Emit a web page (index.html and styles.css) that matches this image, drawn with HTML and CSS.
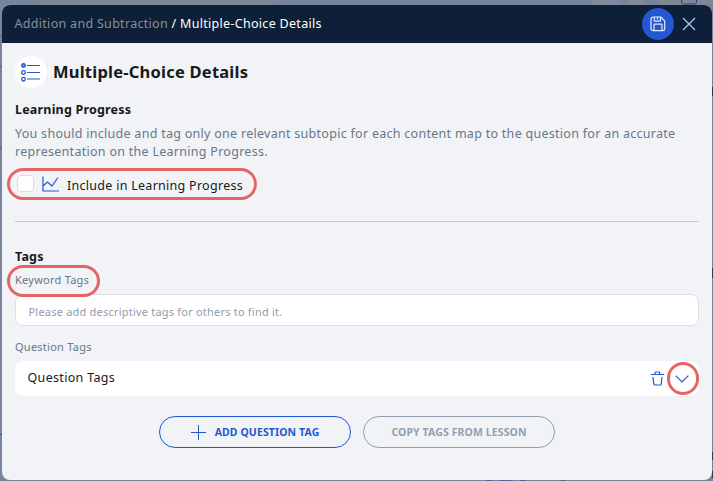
FILE: index.html
```html
<!DOCTYPE html>
<html lang="en">
<head>
<meta charset="utf-8">
<title>Multiple-Choice Details</title>
<link rel="stylesheet" href="styles.css">
</head>
<body>
<div class="backdrop" aria-hidden="true">
  <svg width="713" height="481" viewBox="0 0 713 481">
    <rect x="40" width="235" height="5" fill="#7d8796"/>
    <rect x="593" width="51" height="5" fill="#808a98"/>
    <rect x="660" width="53" height="5" fill="#7e8897"/>
    <circle cx="623" cy="-3" r="7" fill="#7484a9"/>
    <path d="M681.500 0v2q0 2 2 2h11q2 0 2-2V0" fill="none" stroke="#263f88"/>
    <path d="M0 35.500h2M0 66.500h2M0 148.500h2" stroke="#586579"/>
    <path d="M0 434.500h2" stroke="#4056a0"/>
    <path d="M712.500 87v9M712.500 268v10M712.500 452v8M712.500 471v7" stroke="#303a4b"/>
    <path d="M486 480.500h6M499 480.500h14M520 480.500h6M561 480.500h4" stroke="#50639a"/>
  </svg>
</div>
<main class="dialog">
  <header class="topbar">
    <nav class="crumbs"><span class="parent">Addition and Subtraction</span> / Multiple-Choice Details</nav>
    <button class="save" aria-label="Save">
      <svg width="16" height="16" viewBox="0 0 16 16"><path d="M3.300 1H11l3.700 4v7.500q0 2.200-2.200 2.200h-9Q1 14.700 1 12.500v-9Q1 1 3.300 1ZM4.200 1.200v3.200q0 .8.800.8h4.700q.8 0 .8-.8V1.200M7.500 1.500v2M4 14.500V9q0-.8.800-.8h6.400q.8 0 .8.800v5.500"/></svg>
    </button>
    <button class="close" aria-label="Close">
      <svg width="14" height="14" viewBox="0 0 14 14"><path d="M1 1l12 12M13 1L1 13"/></svg>
    </button>
  </header>
  <div class="content">
    <div class="heading">
      <span class="badge">
        <svg width="20" height="20" viewBox="0 0 20 20"><g fill="none" stroke="#2458d3"><circle cx="2.500" cy="3.500" r="1.800" fill="#7896e2" stroke-width="1.300"/><circle cx="2.500" cy="10.500" r="1.800" stroke-width="1.300"/><circle cx="2.500" cy="17.200" r="1.800" stroke-width="1.300"/><path d="M6 3.500h13M6 10.500h13M6 17h13"/></g></svg>
      </span>
      <h1>Multiple-Choice Details</h1>
    </div>
    <h2 class="progress-title">Learning Progress</h2>
    <p class="intro">You should include and tag only one relevant subtopic for each content map to the question for an accurate<br>representation on the Learning Progress.</p>
    <div class="include">
      <span class="checkbox" role="checkbox" aria-checked="false"></span>
      <svg width="17" height="16" viewBox="0 0 17 16"><path d="M1 .5v14.500h16M1 10l4.500-4 4.500 4 6-8.500"/></svg>
      <span class="include-text">Include in Learning Progress</span>
      <i class="ring ring-include"></i>
    </div>
    <hr>
    <h2 class="tags-title">Tags</h2>
    <div class="label keyword"><span>Keyword Tags</span><i class="ring ring-keyword"></i></div>
    <div class="input">Please add descriptive tags for others to find it.</div>
    <div class="label question">Question Tags</div>
    <div class="row">
      <span class="row-name">Question Tags</span>
      <svg class="trash" width="15" height="15" viewBox="0 0 15 15"><path d="M.8 3.500h13.400M5 3.300V1.800q0-.8.800-.8h3q.8 0 .8.800v1.500M3 6l.8 7q.1 1 1.200 1h5q1.100 0 1.200-1l.8-7"/></svg>
      <span class="expand"><svg width="14" height="8" viewBox="0 0 14 8"><path d="M.7.700l6.300 6.300 6.300-6.300"/></svg><i class="ring ring-expand"></i></span>
    </div>
    <div class="actions">
      <button class="btn add"><svg width="15" height="15" viewBox="0 0 15 15"><path d="M7.500 0v15M0 7.500h15"/></svg><span>ADD QUESTION TAG</span></button>
      <button class="btn copy"><span>COPY TAGS FROM LESSON</span></button>
    </div>
  </div>
</main>
</body>
</html>
```
FILE: styles.css
```css
* { box-sizing: border-box; }
body { margin: 0; width: 713px; height: 481px; padding: 5px 1px 1px 2px; overflow: hidden; background: #77849a; font: 12.5px/18px "Noto Sans", sans-serif; color: #18191b; letter-spacing: .28px; }
.backdrop { position: absolute; inset: 0; }
.backdrop svg { display: block; }
button { font: inherit; letter-spacing: inherit; border: 0; padding: 0; background: none; display: flex; align-items: center; justify-content: center; }
svg { display: block; flex: none; fill: none; }
h1, h2, p { margin: 0; }
.dialog { position: relative; height: 475px; border-radius: 8px; overflow: hidden; background: #f1f3f7; }
.topbar { height: 38px; display: flex; align-items: center; padding: 0 16px 0 12.500px; background: #0e2038; }
.crumbs { flex: 1; color: #fff; letter-spacing: .3px; white-space: nowrap; }
.parent { color: #84909e; }
.save { width: 32px; height: 32px; border-radius: 50%; background: #2458d3; margin-right: 8px; }
.save svg { stroke: #e4ebfc; stroke-width: 1.2; }
.close svg { stroke: #b4c8fa; stroke-width: 1.2; }
.content { padding: 13px 13px 0; }
.heading { display: flex; align-items: center; gap: 6px; height: 32px; }
.badge { width: 32px; height: 32px; border-radius: 50%; background: #fff; display: flex; align-items: center; justify-content: center; }
.badge svg { margin-right: 1px; }
h1 { font-size: 16.5px; line-height: 24px; font-weight: 700; letter-spacing: .22px; }
h2 { font-size: 12.5px; line-height: 18px; font-weight: 700; letter-spacing: .2px; }
.progress-title { margin-top: 13px; }
.intro { margin-top: 6px; color: #687789; white-space: nowrap; }
.include { position: relative; display: flex; align-items: center; height: 18px; margin-top: 14px; padding-left: 2px; }
.include svg { margin: 0 8px; stroke: #2458d3; stroke-width: 1.2; }
.include-text { padding-top: 4px; }
.checkbox { width: 17px; height: 17px; margin-top: -2px; border: 1px solid #d9dde3; border-radius: 4px; background: #fff; }
.ring { position: absolute; border: 3px solid #e66466; border-radius: 16px; }
.ring-include { left: -8px; top: -7px; width: 250px; height: 32px; }
.ring-keyword { left: -8px; top: -7px; width: 93px; height: 32px; }
.ring-expand { left: -8px; top: -13px; width: 32px; height: 33px; }
hr { height: 1px; border: 0; margin: 28px 0 26px; background: #c5cad2; }
.label { position: relative; font-size: 11px; line-height: 16px; color: #687789; letter-spacing: .25px; }
.keyword { margin-top: 6px; }
.input { margin-top: 6px; height: 32px; border: 1px solid #dce0e6; border-radius: 8px; background: #fff; padding: 0 12.500px; font-size: 11px; line-height: 34px; color: #929dac; letter-spacing: .21px; }
.question { margin-top: 13px; }
.row { margin-top: 6px; height: 35px; border-radius: 8px; background: #fff; display: flex; align-items: center; padding: 0 10px 0 12.500px; }
.row-name { flex: 1; padding-bottom: 1px; letter-spacing: .32px; }
.row svg { stroke: #2458d3; stroke-width: 1.2; }
.trash { margin-right: 10px; }
.expand { position: relative; }
.actions { display: flex; justify-content: center; gap: 12px; margin-top: 20px; }
.btn { width: 192px; height: 32px; border: 1px solid; border-radius: 16px; font-size: 10.5px; font-weight: 700; letter-spacing: .11px; }
.add { color: #2458d3; gap: 9px; }
.add svg { stroke: currentColor; }
.copy { color: #939fae; }
```
